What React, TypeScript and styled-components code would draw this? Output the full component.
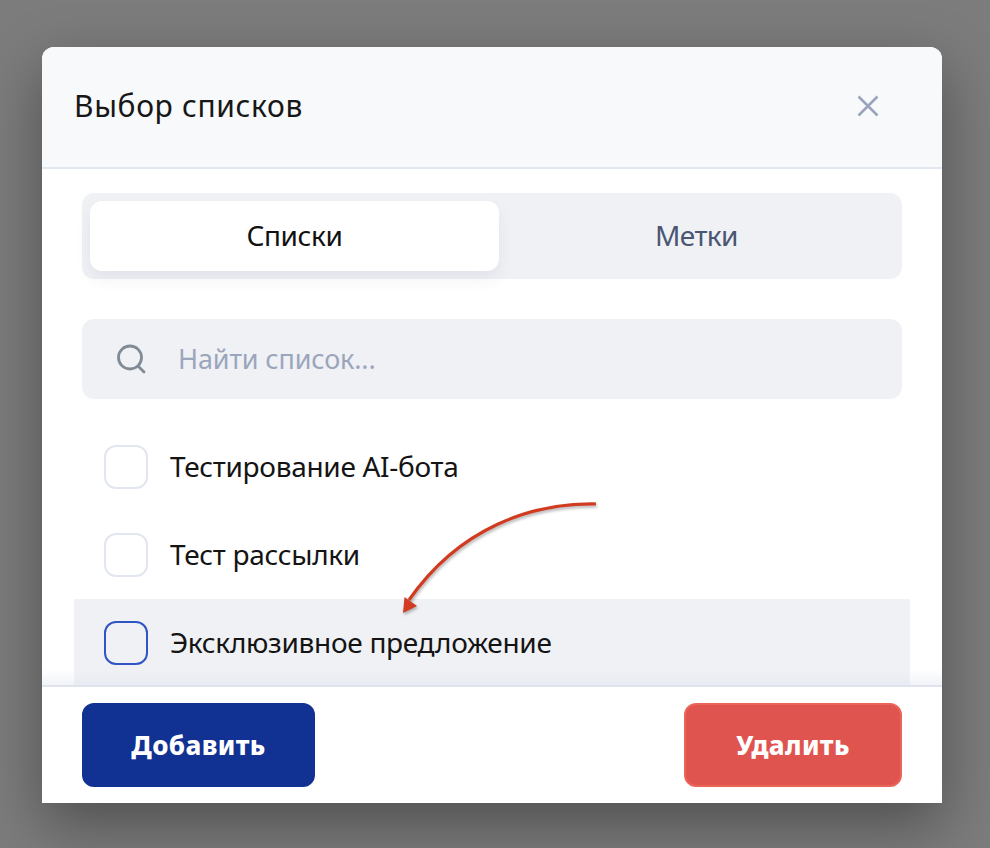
import React from "react";
import styled, { createGlobalStyle } from "styled-components";

const Global = createGlobalStyle`
  html, body { margin: 0; padding: 0; background: #7c7c7c; }
  body { font-family: "Noto Sans", "Open Sans", sans-serif; }
  * { box-sizing: border-box; }
`;

const Page = styled.div`
  width: 990px;
  height: 848px;
  padding: 47px 48px 45px 42px;
  overflow: hidden;
  background: #7c7c7c;
`;

const Modal = styled.div`
  position: relative;
  width: 900px;
  height: 756px;
  background: #fff;
  border-radius: 12px 12px 0 0;
  box-shadow: 0 22px 60px rgba(0, 0, 0, 0.36);
`;

const Header = styled.header`
  height: 122px;
  display: flex;
  align-items: center;
  justify-content: space-between;
  padding: 0 62px 2px 32px;
  background: #f8f9fb;
  border-bottom: 2px solid #e2e8f0;
  border-radius: 12px 12px 0 0;
`;

const Title = styled.h1`
  margin: 0;
  font-size: 30px;
  font-weight: 400;
  line-height: 36px;
  letter-spacing: 0.65px;
  color: #171717;
`;

const CloseButton = styled.button`
  display: flex;
  width: 24px;
  height: 24px;
  padding: 0;
  border: 0;
  background: none;
  color: #9aa5bd;
`;

const Body = styled.div`
  padding: 24px 40px 0;
`;

const Tabs = styled.div`
  display: grid;
  grid-template-columns: 409px 1fr;
  height: 86px;
  padding: 8px;
  background: #f0f1f5;
  border-radius: 12px;
`;

const Tab = styled.div<{ $active?: boolean }>`
  display: flex;
  align-items: center;
  justify-content: center;
  padding-bottom: 2px;
  font-size: 28px;
  letter-spacing: ${(p) => (p.$active ? "-0.4px" : "-0.6px")};
  color: ${(p) => (p.$active ? "#111" : "#4a5672")};
  background: ${(p) => (p.$active ? "#fff" : "transparent")};
  border-radius: 12px;
  box-shadow: ${(p) => (p.$active ? "0 8px 16px rgba(40, 50, 90, 0.07)" : "none")};
`;

const Search = styled.div`
  display: flex;
  align-items: center;
  gap: 32px;
  height: 80px;
  margin-top: 40px;
  padding: 0 32px 0 34px;
  background: #f0f1f5;
  border-radius: 12px;
  color: #808b96;
`;

const Placeholder = styled.span`
  padding-bottom: 2px;
  font-size: 27px;
  letter-spacing: -0.15px;
  color: #9ba6bd;
`;

const List = styled.div`
  position: relative;
  margin: 24px -8px 0;
  height: 264px;
`;

const Row = styled.div<{ $hover?: boolean }>`
  display: flex;
  align-items: center;
  gap: 22px;
  height: 88px;
  padding: 0 30px;
  font-size: 28px;
  letter-spacing: -0.3px;
  color: #141414;
  background: ${(p) => (p.$hover ? "#f0f1f5" : "transparent")};
`;

const RowLabel = styled.span`
  padding-bottom: 2px;
`;

const Check = styled.span<{ $hover?: boolean }>`
  flex: none;
  width: 44px;
  height: 44px;
  border: 2px solid ${(p) => (p.$hover ? "#2f55c4" : "#e2e6f0")};
  border-radius: 12px;
`;

const Fade = styled.div`
  position: absolute;
  left: -32px;
  right: -32px;
  bottom: 0;
  height: 18px;
  background: linear-gradient(rgba(226, 230, 240, 0), rgba(226, 230, 240, 0.55));
`;

const Footer = styled.footer`
  height: 116px;
  display: flex;
  align-items: flex-start;
  justify-content: space-between;
  padding: 16px 40px 0;
  margin-top: -2px;
  border-top: 2px solid #dfe3ed;
  position: relative;
  background: #fff;
`;

const Action = styled.button<{ $danger?: boolean }>`
  width: ${(p) => (p.$danger ? "218px" : "233px")};
  height: 84px;
  padding: 0;
  border: 2px solid ${(p) => (p.$danger ? "#ea6458" : "#113193")};
  border-radius: 12px;
  background: ${(p) => (p.$danger ? "#df544f" : "#113193")};
  color: #fff;
  font-family: inherit;
  font-size: 26px;
  font-weight: 800;
  letter-spacing: 0.4px;
`;

const ArrowSvg = styled.svg`
  position: absolute;
  left: 350px;
  top: 440px;
  overflow: visible;
  filter: drop-shadow(1px 2px 1.5px rgba(0, 0, 0, 0.3));
`;

export default function App() {
  const items = ["Тестирование AI-бота", "Тест рассылки", "Эксклюзивное предложение"];
  return (
    <>
      <Global />
      <Page>
        <Modal>
          <Header>
            <Title>Выбор списков</Title>
            <CloseButton aria-label="Закрыть">
              <svg width="24" height="24" viewBox="0 0 24 24" fill="none" stroke="currentColor" strokeWidth="2.6">
                <path d="M2.5 2.5 21.5 21.5M21.5 2.5 2.5 21.5" />
              </svg>
            </CloseButton>
          </Header>
          <Body>
            <Tabs>
              <Tab $active>Списки</Tab>
              <Tab>Метки</Tab>
            </Tabs>
            <Search>
              <svg width="30" height="30" viewBox="0 0 30 30" fill="none" stroke="currentColor" strokeWidth="2.8" strokeLinecap="round">
                <circle cx="14" cy="13.5" r="11.5" />
                <path d="M23 23 28 28" />
              </svg>
              <Placeholder>Найти список...</Placeholder>
            </Search>
            <List>
              {items.map((t, i) => (
                <Row key={t} $hover={i === 2}>
                  <Check $hover={i === 2} />
                  <RowLabel>{t}</RowLabel>
                </Row>
              ))}
              <Fade />
            </List>
          </Body>
          <Footer>
            <Action>Добавить</Action>
            <Action $danger>Удалить</Action>
          </Footer>
          <ArrowSvg width="200" height="120" viewBox="0 0 200 120" fill="none">
            <path d="M204 17C140 16 68 40 17 113" stroke="#d13c21" strokeWidth="3.2" />
            <path d="M11 126 12.500 110 25 119Z" fill="#d13c21" />
          </ArrowSvg>
        </Modal>
      </Page>
    </>
  );
}
